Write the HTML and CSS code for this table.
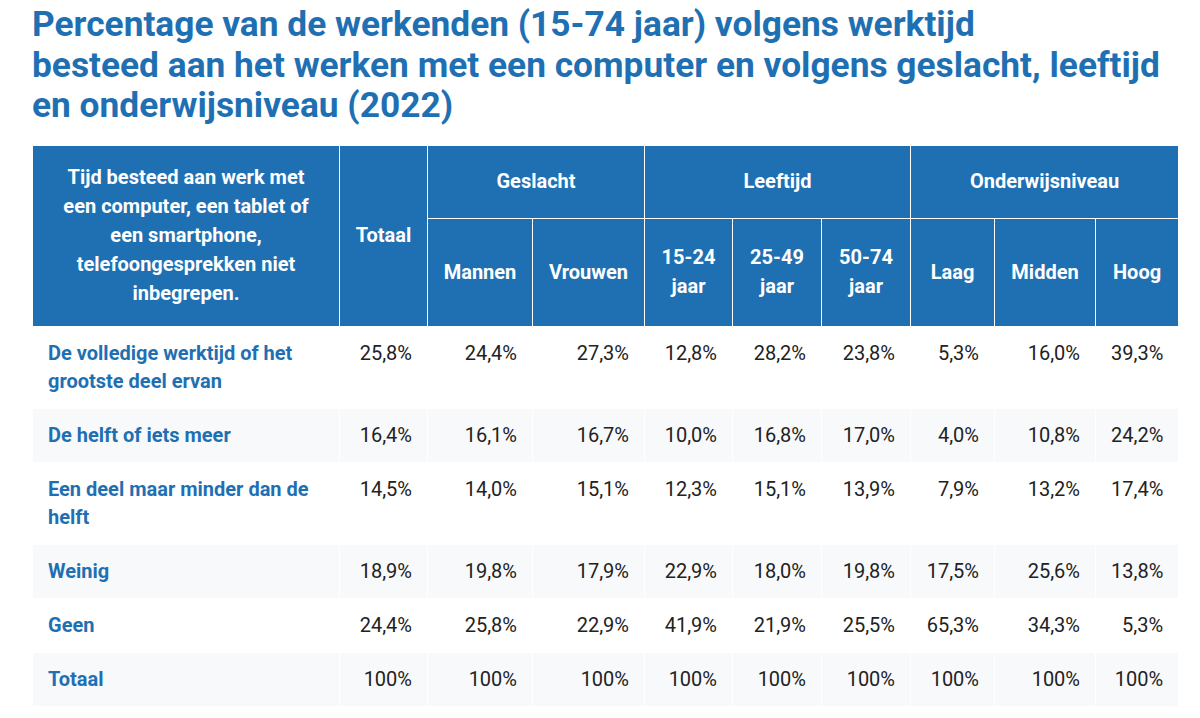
FILE: index.html
```html
<!DOCTYPE html>
<html lang="nl">
<head>
<meta charset="utf-8">
<title>Werktijd met een computer</title>
<link rel="stylesheet" href="styles.css">
</head>
<body>
<main class="page">
  <h1 class="title">Percentage van de werkenden (15-74 jaar) volgens werktijd<br>besteed aan het werken met een computer en volgens geslacht, leeftijd<br>en onderwijsniveau (2022)</h1>
  <table class="data">
    <colgroup>
      <col class="c-label"><col class="c-tot"><col class="c-man"><col class="c-vrouw">
      <col class="c-a1"><col class="c-a2"><col class="c-a3">
      <col class="c-laag"><col class="c-mid"><col class="c-hoog">
    </colgroup>
    <thead>
      <tr class="h1">
        <th rowspan="2" class="h-label">Tijd besteed aan werk met een computer, een tablet of een smartphone, telefoongesprekken niet inbegrepen.</th>
        <th rowspan="2">Totaal</th>
        <th colspan="2">Geslacht</th>
        <th colspan="3">Leeftijd</th>
        <th colspan="3">Onderwijsniveau</th>
      </tr>
      <tr class="h2">
        <th>Mannen</th><th>Vrouwen</th>
        <th>15-24<br>jaar</th><th>25-49<br>jaar</th><th>50-74<br>jaar</th>
        <th>Laag</th><th>Midden</th><th>Hoog</th>
      </tr>
    </thead>
    <tbody>
      <tr>
        <th>De volledige werktijd of het grootste deel ervan</th>
        <td>25,8%</td><td>24,4%</td><td>27,3%</td><td>12,8%</td><td>28,2%</td><td>23,8%</td><td>5,3%</td><td>16,0%</td><td>39,3%</td>
      </tr>
      <tr>
        <th>De helft of iets meer</th>
        <td>16,4%</td><td>16,1%</td><td>16,7%</td><td>10,0%</td><td>16,8%</td><td>17,0%</td><td>4,0%</td><td>10,8%</td><td>24,2%</td>
      </tr>
      <tr>
        <th>Een deel maar minder dan de helft</th>
        <td>14,5%</td><td>14,0%</td><td>15,1%</td><td>12,3%</td><td>15,1%</td><td>13,9%</td><td>7,9%</td><td>13,2%</td><td>17,4%</td>
      </tr>
      <tr>
        <th>Weinig</th>
        <td>18,9%</td><td>19,8%</td><td>17,9%</td><td>22,9%</td><td>18,0%</td><td>19,8%</td><td>17,5%</td><td>25,6%</td><td>13,8%</td>
      </tr>
      <tr>
        <th>Geen</th>
        <td>24,4%</td><td>25,8%</td><td>22,9%</td><td>41,9%</td><td>21,9%</td><td>25,5%</td><td>65,3%</td><td>34,3%</td><td>5,3%</td>
      </tr>
      <tr>
        <th>Totaal</th>
        <td>100%</td><td>100%</td><td>100%</td><td>100%</td><td>100%</td><td>100%</td><td>100%</td><td>100%</td><td>100%</td>
      </tr>
    </tbody>
  </table>
</main>
</body>
</html>
```

FILE: styles.css
```css
html, body {
  margin: 0;
  padding: 0;
  background: #ffffff;
}

body {
  font-family: Roboto, "Liberation Sans", Arial, sans-serif;
  color: #222222;
}

.page {
  padding: 4px 22px 0 32px;
}

.title {
  margin: 0 0 19px 0;
  font-size: 35.3px;
  line-height: 40.5px;
  font-weight: 700;
  color: #1f70b3;
}

.data {
  border-collapse: collapse;
  table-layout: fixed;
  width: 1146px;
  font-size: 20px;
}

.c-label { width: 307px; }
.c-tot { width: 88px; }
.c-man { width: 105px; }
.c-vrouw { width: 112px; }
.c-a1 { width: 88px; }
.c-a2 { width: 89px; }
.c-a3 { width: 89px; }
.c-laag { width: 84px; }
.c-mid { width: 101px; }
.c-hoog { width: 83px; }

.data thead th {
  background: #1f70b3;
  color: #ffffff;
  font-weight: 700;
  text-align: center;
  vertical-align: middle;
  border: 1px solid #ffffff;
  line-height: 29px;
  padding: 0 6px;
}

.data thead .h1 th {
  height: 72px;
}

.data thead .h2 th {
  height: 107px;
}

.data thead th.h-label {
  padding: 0 20px;
}

.data tbody th,
.data tbody td {
  border: 1px solid #ffffff;
  line-height: 28px;
  padding: 12px 15px 13px 15px;
  vertical-align: top;
}

.data tbody th {
  text-align: left;
  font-weight: 700;
  color: #1f70b3;
}

.data tbody td {
  text-align: right;
  color: #222222;
  font-weight: 400;
}

.data tbody tr:nth-child(even) th,
.data tbody tr:nth-child(even) td {
  background: #f8f9fb;
}
```
